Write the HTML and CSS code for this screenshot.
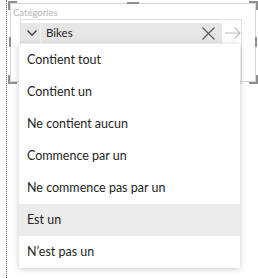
FILE: index.html
```html
<!DOCTYPE html>
<html lang="fr">
<head>
<meta charset="utf-8">
<link rel="stylesheet" href="styles.css">
</head>
<body>
<div class="page">
  <div class="rail">
    <div class="frame">
      <span class="h h-tl"></span><span class="h h-tr"></span>
      <span class="h h-bl"></span><span class="h h-br"></span>
      <span class="h h-ml"></span><span class="h h-mr"></span>
      <span class="h h-tm"></span>
      <div class="label">Catégories</div>
      <div class="inner">
        <div class="filter-line">
          <div class="row">
            <div class="chev">
              <svg width="10" height="6" viewBox="0 0 10 6"><polyline points="0.5,0.5 5,5.2 9.5,0.5" fill="none" stroke="#333" stroke-width="1.2"/></svg>
            </div>
            <div class="sep"></div>
            <div class="value">Bikes</div>
            <div class="clear">
              <svg width="13" height="13" viewBox="0 0 13 13"><path d="M0.5 0.5 L12.5 12.5 M12.5 0.5 L0.5 12.5" stroke="#555" stroke-width="1.1" fill="none"/></svg>
            </div>
          </div>
          <div class="go">
            <svg width="16" height="12" viewBox="0 0 16 12"><path d="M0 6 H15 M9.5 0.5 L15 6 L9.5 11.5" stroke="#bdbdbd" stroke-width="1.1" fill="none"/></svg>
          </div>
        </div>
      </div>
    </div>
  </div>
  <ul class="menu">
    <li class="item">Contient tout</li>
    <li class="item">Contient un</li>
    <li class="item">Ne contient aucun</li>
    <li class="item">Commence par un</li>
    <li class="item">Ne commence pas par un</li>
    <li class="item active">Est un</li>
    <li class="item">N’est pas un</li>
  </ul>
</div>
</body>
</html>
```

FILE: styles.css
```css
html, body {
  margin: 0;
  padding: 0;
  background: #ffffff;
}
body {
  font-family: "Lato", "Open Sans", sans-serif;
  color: #252423;
}
.page {
  position: relative;
  width: 258px;
  height: 278px;
  overflow: hidden;
}
.rail {
  margin-left: 6px;
  height: 278px;
  border-left: 1px dotted #6a6a6a;
  padding-left: 3px;
  padding-top: 3px;
  box-sizing: border-box;
}
.frame {
  position: relative;
  width: 243px;
  height: 77px;
  border: 1px solid #d6d6d6;
  padding-left: 1px;
  box-sizing: content-box;
}
.h {
  position: absolute;
  background: #8f8f8f;
}
.h-tl, .h-tr, .h-bl, .h-br {
  width: 7px;
  height: 7px;
  background: transparent;
  border-color: #8f8f8f;
  border-style: solid;
  border-width: 0;
}
.h-tl { left: -3px; top: -3px; border-left-width: 2px; border-top-width: 2px; }
.h-tr { right: -3px; top: -3px; border-right-width: 2px; border-top-width: 2px; }
.h-bl { left: -3px; bottom: -3px; border-left-width: 2px; border-bottom-width: 2px; }
.h-br { right: -3px; bottom: -3px; border-right-width: 2px; border-bottom-width: 2px; }
.h-ml { left: -2px; top: 33px; width: 2px; height: 10px; }
.h-mr { right: -2px; top: 33px; width: 2px; height: 10px; }
.h-tm { left: 116px; top: -2px; width: 12px; height: 2px; }
.label {
  font-size: 9.5px;
  line-height: 12px;
  color: #b4b4b4;
  padding-top: 3px;
  padding-left: 1px;
  height: 12px;
}
.inner {
  margin-left: 8px;
  width: 220px;
  height: 60px;
  border: 1px solid #e0e0e0;
  padding-top: 3px;
  box-sizing: content-box;
}
.filter-line {
  display: flex;
  align-items: center;
}
.row {
  display: flex;
  align-items: center;
  width: 205px;
  height: 20px;
  background: #e6e6e6;
}
.chev {
  width: 19px;
  height: 20px;
  display: flex;
  align-items: center;
  justify-content: center;
  padding-left: 3px;
  box-sizing: border-box;
}
.sep {
  width: 1px;
  height: 20px;
  background: #f2f2f2;
}
.value {
  flex: 1;
  padding-left: 5px;
  font-size: 11.5px;
  line-height: 20px;
  color: #252423;
}
.clear {
  width: 20px;
  display: flex;
  align-items: center;
  justify-content: flex-start;
}
.go {
  margin-left: 3px;
  display: flex;
  align-items: center;
}
.menu {
  position: absolute;
  left: 19px;
  top: 44px;
  width: 221px;
  margin: 0;
  padding: 0;
  list-style: none;
  background: #ffffff;
  box-shadow: 0 1px 6px rgba(0, 0, 0, 0.22);
}
.item {
  height: 32px;
  line-height: 32px;
  padding-left: 8px;
  font-size: 12.5px;
  color: #252423;
  white-space: nowrap;
}
.item.active {
  background: #edebe9;
}
```
